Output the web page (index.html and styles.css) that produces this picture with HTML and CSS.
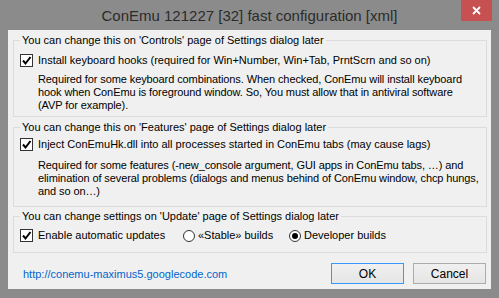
FILE: index.html
```html
<!DOCTYPE html>
<html>
<head>
<meta charset="utf-8">
<title>ConEmu fast configuration</title>
<link rel="stylesheet" href="styles.css">
</head>
<body>
<div class="win">
	<div class="caption">
		<span class="caption-text">ConEmu 121227 [32] fast configuration [xml]</span>
		<span class="close"><svg width="9" height="9" viewBox="0 0 9 9"><path d="M1 1L8 8M8 1L1 8" stroke="#fff" stroke-width="1.8" fill="none"/></svg></span>
	</div>
	<div class="client">
		<fieldset class="grp grp1">
			<legend>You can change this on 'Controls' page of Settings dialog later</legend>
			<div class="row"><span class="box"><svg width="11" height="11" viewBox="0 0 11 11"><path d="M2 5.5L4.5 8.5L9.5 2" stroke="#000" stroke-width="2" fill="none"/></svg></span>Install keyboard hooks (required for Win+Number, Win+Tab, PrntScrn and so on)</div>
			<p class="desc">Required for some keyboard combinations. When checked, ConEmu will install keyboard<br>hook when ConEmu is foreground window. So, You must allow that in antiviral software<br>(AVP for example).</p>
		</fieldset>
		<fieldset class="grp grp2">
			<legend>You can change this on 'Features' page of Settings dialog later</legend>
			<div class="row"><span class="box"><svg width="11" height="11" viewBox="0 0 11 11"><path d="M2 5.5L4.5 8.5L9.5 2" stroke="#000" stroke-width="2" fill="none"/></svg></span>Inject ConEmuHk.dll into all processes started in ConEmu tabs (may cause lags)</div>
			<p class="desc">Required for some features (-new_console argument, GUI apps in ConEmu tabs, …) and<br>elimination of several problems (dialogs and menus behind of ConEmu window, chcp hungs,<br>and so on…)</p>
		</fieldset>
		<fieldset class="grp grp3">
			<legend>You can change settings on 'Update' page of Settings dialog later</legend>
			<div class="row upd">
				<div class="opt"><span class="box"><svg width="11" height="11" viewBox="0 0 11 11"><path d="M2 5.5L4.5 8.5L9.5 2" stroke="#000" stroke-width="2" fill="none"/></svg></span>Enable automatic updates</div>
				<div class="opt"><span class="radio"></span>«Stable» builds</div>
				<div class="opt"><span class="radio on"></span>Developer builds</div>
			</div>
		</fieldset>
		<div class="footer">
			<a class="link" href="#">http://conemu-maximus5.googlecode.com</a>
			<div class="btns">
				<button class="btn def">OK</button>
				<button class="btn">Cancel</button>
			</div>
		</div>
	</div>
</div>
</body>
</html>
```

FILE: styles.css
```css
*{margin:0;padding:0;box-sizing:border-box;}
html,body{width:499px;height:298px;overflow:hidden;}
body{background:#8b8b8b;font:11px "Liberation Sans",Arial,sans-serif;color:#000;}
.win{display:flex;flex-direction:column;height:298px;}
.caption{height:30px;position:relative;display:flex;justify-content:center;align-items:center;font-size:15px;color:#2b2b2b;}
.close{position:absolute;right:7px;top:0;width:31px;height:21px;background:#c75050;display:flex;align-items:center;justify-content:center;}
.client{margin:0 8px;height:259px;background:#f0f0f0;padding:3px 4px 0 5px;}

.grp{border:1px solid #dcdcdc;padding:0 6px 4px;min-width:0;}
.grp legend{padding:0 2px;line-height:14px;}
.row{display:flex;align-items:center;height:13px;line-height:13px;white-space:nowrap;}
.desc{padding-left:18px;line-height:13px;white-space:nowrap;letter-spacing:-0.1px;}
.grp1{padding-top:7px;padding-bottom:4px;}
.grp1 .desc{margin-top:6px;}
.grp2{margin-top:3px;padding-top:4px;padding-bottom:8px;}
.grp2 .desc{margin-top:8px;}
.grp3{margin-top:2px;padding-top:6px;padding-bottom:10px;}

.box{width:13px;height:13px;border:1px solid #333;background:#fff;margin-right:5px;display:flex;align-items:center;justify-content:center;flex:none;}
.upd{display:grid;grid-template-columns:163px 106px auto;}
.opt{display:flex;align-items:center;}
.radio{width:12px;height:12px;border:1px solid #333;border-radius:50%;background:#fff;margin-right:3px;display:flex;align-items:center;justify-content:center;flex:none;}
.radio.on::after{content:"";width:6px;height:6px;border-radius:50%;background:#000;}

.footer{margin-top:10px;display:flex;align-items:center;justify-content:space-between;}
.link{margin-left:10px;color:#0066cc;text-decoration:none;}
.btns{display:flex;gap:9px;margin-right:1px;}
.btn{width:73px;height:21px;border:1px solid #acacac;background:linear-gradient(#f0f0f0,#e5e5e5);font:inherit;font-size:12px;color:#000;}
.btn.def{border-color:#3399ff;}
```
